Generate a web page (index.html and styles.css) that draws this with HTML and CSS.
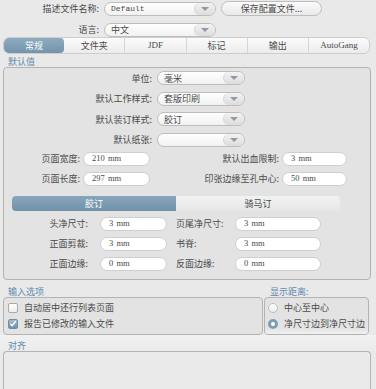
FILE: index.html
```html
<!DOCTYPE html>
<html lang="zh">
<head>
  <meta charset="UTF-8" />
  <title>首选项 - 常规</title>
  <link rel="stylesheet" href="styles.css">
</head>
<body>

  <div class="top-form">
    <label class="top-label">描述文件名称:</label>
    <div class="select wide"><span class="value mono">Default</span><span class="arrow"></span></div>
    <button class="pill-btn">保存配置文件...</button>

    <label class="top-label">语言:</label>
    <div class="select wide"><span class="value">中文</span><span class="arrow"></span></div>
  </div>

  <nav class="tabs">
    <span class="tab active">常规</span>
    <span class="tab">文件夹</span>
    <span class="tab latin">JDF</span>
    <span class="tab">标记</span>
    <span class="tab">输出</span>
    <span class="tab latin">AutoGang</span>
  </nav>

  <div class="group-title">默认值</div>
  <section class="group defaults">
    <div class="select-rows">
      <label>单位:</label>
      <div class="select"><span class="value">毫米</span><span class="arrow"></span></div>
      <label>默认工作样式:</label>
      <div class="select"><span class="value">套版印刷</span><span class="arrow"></span></div>
      <label>默认装订样式:</label>
      <div class="select"><span class="value">胶订</span><span class="arrow"></span></div>
      <label>默认纸张:</label>
      <div class="select"><span class="value"></span><span class="arrow"></span></div>
    </div>

    <div class="size-grid">
      <label>页面宽度:</label>
      <div class="field">210 mm</div>
      <label>默认出血限制:</label>
      <div class="field">3 mm</div>
      <label>页面长度:</label>
      <div class="field">297 mm</div>
      <label>印张边缘至孔中心:</label>
      <div class="field">50 mm</div>
    </div>

    <div class="subtabs">
      <span class="subtab active">胶订</span>
      <span class="subtab">骑马订</span>
    </div>

    <div class="bind-grid">
      <label>头净尺寸:</label>
      <div class="field">3 mm</div>
      <label class="left">页尾净尺寸:</label>
      <div class="field">3 mm</div>
      <label>正面剪裁:</label>
      <div class="field">3 mm</div>
      <label class="left">书脊:</label>
      <div class="field">3 mm</div>
      <label>正面边缘:</label>
      <div class="field">0 mm</div>
      <label class="left">反面边缘:</label>
      <div class="field">0 mm</div>
    </div>
  </section>

  <div class="bottom-row">
    <div class="input-col">
      <div class="group-title">输入选项</div>
      <div class="group option-box">
        <div class="check-row"><span class="checkbox"></span>自动居中还行列表页面</div>
        <div class="check-row"><span class="checkbox checked">
          <svg width="9" height="9" viewBox="0 0 9 9"><path d="M1.5 4.8 L3.6 7 L7.6 1.8" fill="none" stroke="#fff" stroke-width="1.6"/></svg>
        </span>报告已修改的输入文件</div>
      </div>
    </div>
    <div class="display-col">
      <div class="group-title">显示距离:</div>
      <div class="group option-box radios">
        <div class="check-row"><span class="radio"></span>中心至中心</div>
        <div class="check-row"><span class="radio on"></span>净尺寸边到净尺寸边</div>
        <div class="fade"></div>
      </div>
    </div>
  </div>

  <div class="align-band">
    <div class="group-title">对齐</div>
  </div>
  <div class="group align-box"></div>

</body>
</html>
```

FILE: styles.css
```css
body {
  margin: 0;
  width: 376px;
  height: 389px;
  overflow: hidden;
  background-color: #e9e9e9;
  color: #4a4a4a;
  font-family: "Noto Sans CJK SC", "Liberation Sans", sans-serif;
  font-size: 9px;
  line-height: 1;
}

label {
  white-space: nowrap;
}

.mono {
  font-family: "Liberation Mono", "Noto Sans CJK SC", monospace;
  font-size: 8px;
}

.latin {
  font-family: "Liberation Serif", serif;
  font-size: 9px;
}

/* top rows */
.top-form {
  display: grid;
  grid-template-columns: 100px 112px 102px;
  column-gap: 4px;
  row-gap: 6px;
  align-items: center;
  padding-top: 1px;
  height: 36px;
}

.top-label {
  text-align: right;
  padding-right: 1px;
}

.select {
  height: 14px;
  box-sizing: border-box;
  border: 1px solid #bdbdbd;
  border-radius: 8px;
  background: linear-gradient(#ffffff, #f1f1f1);
  display: flex;
  align-items: center;
  justify-content: space-between;
  padding-left: 6px;
}

.select .arrow {
  width: 20px;
  height: 12px;
  border-radius: 7px;
  border-left: 1px solid #d6d6d6;
  background: linear-gradient(#f3f3f3, #dcdcdc);
  display: flex;
  align-items: center;
  justify-content: center;
}

.select .arrow::after {
  content: "";
  border-left: 4px solid transparent;
  border-right: 4px solid transparent;
  border-top: 4px solid #8d9aa8;
}

.pill-btn {
  height: 15px;
  margin-left: 1px;
  padding: 0;
  border: 1px solid #bdbdbd;
  border-radius: 8px;
  background: linear-gradient(#fbfbfb, #e8e8e8);
  color: #4a4a4a;
  font-family: inherit;
  font-size: 9px;
}

/* main tabs */
.tabs {
  display: flex;
  margin-left: 3px;
  width: 367px;
  height: 17px;
  box-sizing: border-box;
  border: 1px solid #cdcdcd;
  border-radius: 6px;
  background: linear-gradient(#fbfbfb, #ececec);
  overflow: hidden;
}

.tab {
  flex: 1;
  display: flex;
  align-items: center;
  justify-content: center;
  border-left: 1px solid #d5d5d5;
}

.tab:first-child {
  border-left: none;
}

.tab.active {
  background: linear-gradient(#8eabc0, #7394ab);
  color: #fff;
  border-radius: 4px;
}

.tab.active + .tab {
  border-left: none;
}

/* group boxes */
.group-title {
  color: #5f89b0;
  padding: 3px 0 2px 8px;
  height: 8px;
}

.group {
  margin-left: 3px;
  width: 368px;
  box-sizing: border-box;
  border: 1px solid #b3b3b3;
  border-radius: 4px;
  background-color: #e3e3e3;
}

.defaults {
  height: 213px;
  padding-top: 3px;
}

.select-rows {
  display: grid;
  grid-template-columns: 148px 88px;
  column-gap: 5px;
  row-gap: 6.5px;
  align-items: center;
}

.select-rows label {
  text-align: right;
}

.size-grid {
  display: grid;
  grid-template-columns: 76px 67px 126px 65px;
  column-gap: 3px;
  row-gap: 6px;
  align-items: center;
  margin-top: 5px;
}

.size-grid label,
.bind-grid label {
  text-align: right;
}

.field {
  height: 14px;
  box-sizing: border-box;
  border: 1px solid #cfcfcf;
  border-radius: 7px;
  background: #fff;
  padding-left: 8px;
  display: flex;
  align-items: center;
  font-family: "Liberation Serif", serif;
  font-size: 8.5px;
  word-spacing: 1px;
}

.subtabs {
  display: flex;
  margin: 10px 0 0 8px;
  width: 328px;
  height: 15px;
  border-radius: 4px;
  background: linear-gradient(#f2f2f2, #e6e6e6);
  overflow: hidden;
}

.subtab {
  flex: 1;
  display: flex;
  align-items: center;
  justify-content: center;
}

.subtab.active {
  background: linear-gradient(#88a6bb, #7192a9);
  color: #fff;
}

.bind-grid {
  display: grid;
  grid-template-columns: 84px 67px 60px 70px;
  column-gap: 12px;
  row-gap: 6px;
  align-items: center;
  margin-top: 6px;
}

.bind-grid label.left {
  text-align: left;
  margin-left: -3px;
}

.bind-grid .field:nth-of-type(2n) {
  margin-left: -16px;
}

/* bottom option boxes */
.bottom-row {
  display: flex;
  margin-top: 4px;
}

.input-col .group {
  width: 260px;
}

.display-col .group-title {
  padding-left: 7px;
}

.display-col .group {
  margin-left: 1px;
  width: 105px;
}

.option-box {
  height: 38px;
  padding: 4px 0 0 4px;
  display: flex;
  flex-direction: column;
  gap: 5px;
  position: relative;
  overflow: hidden;
}

.check-row {
  display: flex;
  align-items: center;
  gap: 6px;
  height: 11px;
}

.checkbox {
  width: 10px;
  height: 10px;
  box-sizing: border-box;
  border: 1px solid #a9a9a9;
  border-radius: 2px;
  background: linear-gradient(#ffffff, #ececec);
  display: flex;
  align-items: center;
  justify-content: center;
}

.checkbox.checked {
  border-color: #6f8ea6;
  background: linear-gradient(#a7c0d2, #6e90aa);
}

.radio {
  width: 10px;
  height: 10px;
  box-sizing: border-box;
  border: 1px solid #bcbcbc;
  border-radius: 50%;
  background: linear-gradient(#ffffff, #ececec);
}

.radio.on {
  border: 3px solid #7d9db4;
  background: #fff;
}

.radios {
  padding-left: 3px;
}

.fade {
  position: absolute;
  left: 0;
  right: 0;
  bottom: 0;
  height: 6px;
  background: linear-gradient(rgba(240, 240, 240, 0), #f0f0f0);
}

.align-band {
  background: linear-gradient(#f1f1f1, #ebebeb);
  height: 16px;
}

.align-band .group-title {
  padding-top: 6px;
}

.align-box {
  height: 40px;
  border-bottom: none;
  border-radius: 4px 4px 0 0;
  background-color: #eaeaea;
}
```
